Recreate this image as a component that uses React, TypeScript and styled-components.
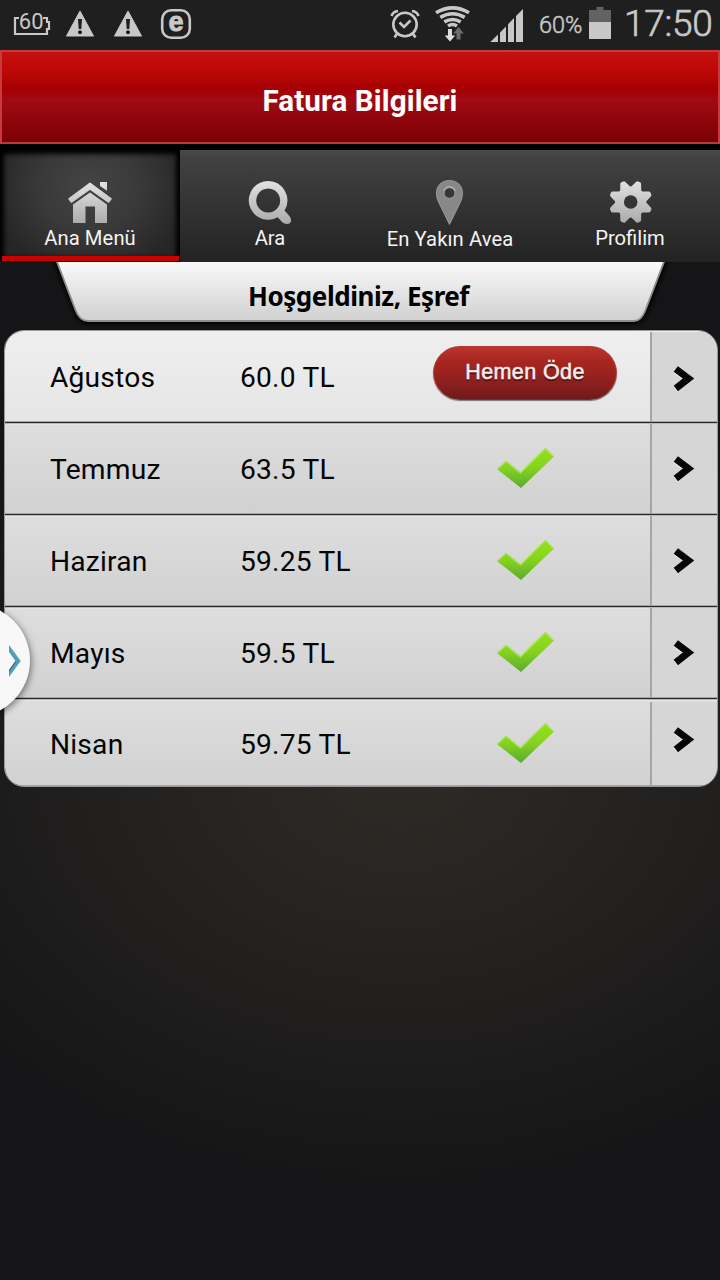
import React from "react";
import styled, { createGlobalStyle, css } from "styled-components";

const GlobalStyle = createGlobalStyle`
  * { box-sizing: border-box; }
  html, body { margin: 0; padding: 0; background: #141416; }
  body { font-family: Roboto, "Liberation Sans", sans-serif; }
`;

const Screen = styled.div`
  width: 720px;
  height: 1280px;
  position: relative;
  overflow: hidden;
  display: flex;
  flex-direction: column;
  background:
    radial-gradient(ellipse 560px 420px at 400px 770px, #2e2a26 0%, #242220 45%, rgba(21, 21, 23, 0) 100%),
    #151517;
`;

const StatusBar = styled.div`
  height: 50px;
  flex: none;
  display: flex;
  background: #1f1f1f;
  color: #c8c8c8;
  svg { display: block; flex: none; }
`;

const StatusSpacer = styled.div`
  flex: 1;
`;

const Percent = styled.span`
  width: 49px;
  padding-left: 8px;
  line-height: 50px;
  font-size: 23.5px;
  white-space: nowrap;
  font-weight: 300;
  -webkit-text-stroke: 0.5px #c8c8c8;
`;

const Clock = styled.span`
  width: 103px;
  padding-left: 7px;
  line-height: 48px;
  font-size: 37px;
  font-weight: 300;
  letter-spacing: -0.3px;
  white-space: nowrap;
  -webkit-text-stroke: 0.7px #c8c8c8;
`;

const TitleBar = styled.header`
  height: 94px;
  flex: none;
  display: flex;
  align-items: center;
  justify-content: center;
  padding-top: 8px;
  border: 2px solid #c93a3c;
  border-bottom-color: #b23b3d;
  background: linear-gradient(#c60f0f 0%, #bd0808 22%, #a40003 42%, #9f0c13 54%, #8b040a 80%, #7c0003 100%);
`;

const Title = styled.h1`
  margin: 0;
  font-size: 29.6px;
  line-height: 34px;
  font-weight: 700;
  letter-spacing: 0.1px;
  color: #fff;
  white-space: nowrap;
`;

const TabBar = styled.nav`
  height: 118px;
  flex: none;
  display: flex;
  padding-top: 6px;
  background: #000;
`;

const Tab = styled.div<{ $active?: boolean }>`
  width: 180px;
  height: 112px;
  padding-top: 26px;
  display: flex;
  flex-direction: column;
  align-items: center;
  background: linear-gradient(#494949 0, #414141 8%, #232323 100%);
  svg { display: block; }
  ${(p) =>
    p.$active &&
    css`
      background: radial-gradient(ellipse 100px 90px at 50% 32%, #444 0%, #393939 50%, #262626 100%);
      box-shadow: inset 0 0 5px 4px #000;
      padding-bottom: 1px;
    `}
`;

const TabLabel = styled.span<{ $spacing?: number; $drop?: number }>`
  font-size: 20.2px;
  line-height: 24px;
  margin-top: ${(p) => p.$drop ?? 0}px;
  letter-spacing: ${(p) => p.$spacing ?? 0}px;
  color: #f4f4f4;
  white-space: nowrap;
`;

const ActiveLine = styled.div`
  width: 177px;
  height: 5px;
  margin-top: auto;
  margin-left: 1px;
  background: #cb0000;
`;

const Ribbon = styled.div`
  height: 68px;
  flex: none;
  display: grid;
  justify-items: center;
  > * { grid-area: 1 / 1; }
  svg { display: block; }
`;

const Greeting = styled.h2`
  margin: 17px 0 0;
  padding-right: 3px;
  z-index: 1;
  height: 34px;
  font: 700 26px/34px "Noto Sans", sans-serif;
  letter-spacing: -0.45px;
  color: #000;
  white-space: nowrap;
`;

const BillList = styled.main`
  height: 457px;
  flex: none;
  margin: 0 2px 0 4px;
  display: flex;
  flex-direction: column;
  overflow: hidden;
  border: 1px solid #999;
  border-radius: 20px;
`;

const Row = styled.div<{ $current?: boolean }>`
  flex: 1 0 0;
  display: flex;
  background: ${(p) => (p.$current ? "linear-gradient(#efefef, #e5e5e5)" : "linear-gradient(#dedede, #d1d1d1)")};
  &:not(:last-child) {
    flex: 0 0 92px;
    border-bottom: 1px solid #262626;
    box-shadow: inset 0 -1px #a6a6a6;
  }
  & + & {
    box-shadow: inset 0 1px #b8b8b8, inset 0 2px #e4e4e4, inset 0 -1px #a6a6a6;
  }
  &:last-child {
    padding-top: 2px;
  }
`;

const Cell = styled.div<{ $width: number }>`
  width: ${(p) => p.$width}px;
  flex: none;
  padding-top: 2px;
  display: flex;
  align-items: center;
  font-size: 28.2px;
  letter-spacing: 0.2px;
  color: #050505;
  white-space: nowrap;
`;

const StatusCell = styled.div`
  flex: 1;
  display: flex;
  align-items: center;
`;

const PayButton = styled.button`
  width: 184px;
  height: 54px;
  margin: 0 0 8px 28px;
  padding: 0 0 2px;
  border: 1px solid #b13a36;
  border-bottom-color: #6d302e;
  border-radius: 27px;
  background: linear-gradient(#bb332c 0%, #a6251f 30%, #96221f 55%, #831e1e 80%, #6e1919 100%);
  box-shadow: 0 1px 1px #777;
  font: 400 21.5px/26px "Liberation Sans", sans-serif;
  letter-spacing: 0.4px;
  color: #f6eeee;
  -webkit-text-stroke: 0.5px #f6eeee;
  text-shadow: 0 2px 1px #4c1010;
`;

const CheckSlot = styled.div`
  padding: 0 0 1px 91px;
  svg { display: block; }
`;

const Arrow = styled.div<{ $shift: number }>`
  width: 67px;
  flex: none;
  display: flex;
  align-items: center;
  justify-content: center;
  background: #d6d6d6;
  border-left: 2px solid #a5a5a5;
  margin: 1px 0;
  padding-right: 1px;
  padding-bottom: ${(p) => (p.$shift < 0 ? -2 * p.$shift : 0)}px;
  padding-top: ${(p) => (p.$shift > 0 ? 2 * p.$shift : 0)}px;
  svg { display: block; }
`;

const EdgeHandle = styled.div`
  position: absolute;
  left: -83px;
  top: 604px;
  width: 113px;
  height: 113px;
  border-radius: 50%;
  display: flex;
  align-items: center;
  justify-content: flex-end;
  padding-right: 8px;
  background: #f8f8f8;
  box-shadow: 1px 2px 7px rgba(0, 0, 0, 0.5);
`;

const WarningIcon = ({ x }: { x: number }) => (
  <g transform={`translate(${x} 0)`}>
    <path d="M14 11 L27.5 36 H0.5 Z" fill="#c8c8c8" stroke="#c8c8c8" strokeWidth="1" strokeLinejoin="round" />
    <path d="M12 19 H16 L15.3 29 H12.7 Z" fill="#1f1f1f" />
    <circle cx="14" cy="32.3" r="2" fill="#1f1f1f" />
  </g>
);

const NotificationIcons = () => (
  <svg width="200" height="50" viewBox="0 0 200 50">
    <path d="M19 18 H15 V34 H47 V29 H49 V22 H47 V18 H43" fill="none" stroke="#c8c8c8" strokeWidth="2.2" />
    <text x="31.2" y="28.5" textAnchor="middle" fontFamily="Roboto" fontSize="22" fill="#c8c8c8">60</text>
    <WarningIcon x={66} />
    <WarningIcon x={114} />
    <rect x="162.2" y="10.2" width="27.6" height="27.6" rx="9" fill="none" stroke="#c8c8c8" strokeWidth="2.6" />
    <text x="176" y="31.2" textAnchor="middle" fontFamily="Liberation Sans" fontWeight="700" fontSize="27" fill="#c8c8c8" stroke="#c8c8c8" strokeWidth="0.9">e</text>
  </svg>
);

const SystemIcons = () => (
  <svg width="146" height="50" viewBox="385 0 146 50">
    <g fill="none" stroke="#c8c8c8" strokeWidth="2.6">
      <circle cx="405" cy="24.5" r="11.7" />
      <path d="M399.5 22.5 L404 27 L410.5 20.5" />
      <path d="M391.5 16 Q393 11.5 398 11 M418.5 16 Q417 11.5 412 11" />
      <path d="M397.5 33 L394.5 37.5 M412.5 33 L415.5 37.5" />
    </g>
    <g fill="none" stroke="#c8c8c8" strokeWidth="3.6">
      <path d="M436 12.7 Q452.5 3 469 12.7" />
      <path d="M440.3 17.4 Q452.5 10 464.7 17.4" />
      <path d="M444.3 21.9 Q452.5 17 460.7 21.9" />
      <path d="M448 26 Q452.5 23 457 26" />
    </g>
    <path d="M448 29 H452 V35.5 H455.3 L450 41.5 L444.7 35.5 H448 Z" fill="#dedede" />
    <path d="M456.5 39.5 H460.5 V33.5 H463.8 L458.5 27 L453.2 33.5 H456.5 Z" fill="#6c6c6c" />
    <g fill="#c8c8c8">
      <path d="M490.3 42 L498 34.5 V42 Z" />
      <path d="M500 42 V32.5 L506 26.6 V42 Z" />
      <path d="M508 42 V24.2 L514 18 V42 Z" />
      <path d="M516 42 V16 L523 9 V42 Z" />
    </g>
  </svg>
);

const BatteryIcon = () => (
  <svg width="37" height="50" viewBox="580 0 37 50">
    <path d="M589 10 H596.5 V7 H603.5 V10 H611 V22 H589 Z" fill="#626262" />
    <rect x="589" y="22" width="22" height="17" fill="#c8c8c8" />
  </svg>
);

const HomeIcon = () => (
  <svg width="48" height="50" viewBox="66 176 48 50">
    <defs>
      <linearGradient id="home" gradientUnits="userSpaceOnUse" x1="0" y1="181" x2="0" y2="223">
        <stop offset="0" stopColor="#e4e4e4" />
        <stop offset="1" stopColor="#adadad" />
      </linearGradient>
    </defs>
    <g fill="url(#home)">
      <path
        d="M90 183.3 L111 198.8 L108.6 202 L90 188.8 L71.4 202 L69 198.8 Z"
        stroke="url(#home)"
        strokeWidth="1.6"
        strokeLinejoin="round"
      />
      <path d="M100 182 H107 V190.8 L100 186 Z" />
      <path d="M90 192.5 L107 204.5 V223 H95 V206.5 H85.5 V223 H73 V204.5 Z" />
    </g>
  </svg>
);

const SearchIcon = () => (
  <svg width="48" height="50" viewBox="246 176 48 50">
    <defs>
      <linearGradient id="search" x1="0" y1="0" x2="0" y2="1">
        <stop offset="0" stopColor="#e2e2e2" />
        <stop offset="1" stopColor="#ababab" />
      </linearGradient>
    </defs>
    <path
      d="M268.2 181 A19.4 19.4 0 1 0 277.7 217.3 L282 222 Q284 224 287 224 Q291 223.7 291 220.5 Q291 217.5 289 215.5 L284.5 210.5 A19.4 19.4 0 0 0 268.2 181 Z M268.2 188.5 A12 12 0 1 1 268.19 188.5 Z"
      fill="url(#search)"
      fillRule="evenodd"
    />
  </svg>
);

const PinIcon = () => (
  <svg width="48" height="50" viewBox="426 176 48 50">
    <path
      d="M449.5 224.5 L438.5 202 C433 190 439 180.5 449.5 180.5 C460 180.5 466 190 460.5 202 Z M449.5 187.7 A5.3 5.3 0 1 0 449.51 187.7 Z"
      fill="#888"
      stroke="#a3a3a3"
      strokeWidth="0.8"
      fillRule="evenodd"
    />
    <path d="M443.8 191 A6 6 0 0 1 455.2 191" fill="none" stroke="#c9c9c9" strokeWidth="1" />
  </svg>
);

const teeth = [22.5, 67.5, 112.5, 157.5, 202.5, 247.5, 292.5, 337.5];

const GearIcon = () => (
  <svg width="48" height="50" viewBox="606 176 48 50">
    <defs>
      <linearGradient id="gear" gradientUnits="userSpaceOnUse" x1="0" y1="-20" x2="0" y2="20">
        <stop offset="0" stopColor="#e0e0e0" />
        <stop offset="1" stopColor="#acacac" />
      </linearGradient>
      <mask id="gearMask">
        <g fill="#fff">
          <circle r="15.6" />
          {teeth.map((a) => (
            <path
              key={a}
              d="M-6.5 -12 L-3.2 -19.5 Q-2.7 -21.9 -1 -21.9 H1 Q2.7 -21.9 3.2 -19.5 L6.5 -12 Z"
              transform={`rotate(${a})`}
            />
          ))}
        </g>
        <circle r="6.8" fill="#000" />
      </mask>
    </defs>
    <g transform="translate(630.7 202)">
      <rect x="-23" y="-23" width="46" height="46" fill="url(#gear)" mask="url(#gearMask)" />
    </g>
  </svg>
);

const RibbonShape = () => (
  <svg width="720" height="68" viewBox="0 262 720 68">
    <defs>
      <linearGradient id="ribbon" x1="0" y1="0" x2="0" y2="1">
        <stop offset="0" stopColor="#fcfcfc" />
        <stop offset="1" stopColor="#d0d0d0" />
      </linearGradient>
      <filter id="ribbonShadow" x="-5%" y="-20%" width="110%" height="150%">
        <feGaussianBlur stdDeviation="2.5" />
      </filter>
    </defs>
    <path d="M52 258 L74 312 Q77 324 90 324 H632 Q643 324 648 312 L669 258 Z" fill="#000" filter="url(#ribbonShadow)" />
    <path
      d="M55.5 258 L75.5 310 Q79.5 321 88 321 H634 Q641.5 321 645.5 310 L665.5 258 Z"
      fill="url(#ribbon)"
      stroke="#8e8e8e"
      strokeWidth="1.8"
    />
  </svg>
);

const CheckIcon = () => (
  <svg width="60" height="42" viewBox="0 0 60 42">
    <defs>
      <linearGradient id="check" x1="0" y1="0" x2="0" y2="1">
        <stop offset="0" stopColor="#96e01b" />
        <stop offset="0.5" stopColor="#85d31e" />
        <stop offset="1" stopColor="#5bab32" />
      </linearGradient>
    </defs>
    <path
      d="M1.5 22 L10 14.5 L24.5 26 L49.5 1.5 L57.5 9.5 L25 40.5 Z"
      fill="url(#check)"
      stroke="url(#check)"
      strokeWidth="1"
      strokeLinejoin="round"
    />
    <path d="M2 21.5 L10 14.3 L24.5 25.8 L49.5 1.5 L57 9" fill="none" stroke="#a9e55a" strokeWidth="1.3" />
  </svg>
);

const ChevronIcon = () => (
  <svg width="26" height="30" viewBox="0 0 26 30">
    <path d="M4.5 6.5 L17 15.7 L4.5 25.5" fill="none" stroke="#efefef" strokeWidth="6" />
    <path d="M4.8 5 L17.5 14.5 L4.8 24.5" fill="none" stroke="#050505" strokeWidth="7" />
  </svg>
);

const HandleArrow = () => (
  <svg width="14" height="34" viewBox="0 0 14 34">
    <path d="M1 1 L12.7 17 L1 33 V26 L7.5 17 L1 8 Z" fill="#519fbb" />
    <path d="M1 26 L7.5 17 L8.3 18 L1 28 Z" fill="#387087" />
  </svg>
);

const bills = [
  { month: "Ağustos", amount: "60.0 TL", due: true, arrowShift: 2 },
  { month: "Temmuz", amount: "63.5 TL", arrowShift: 0 },
  { month: "Haziran", amount: "59.25 TL", arrowShift: 0 },
  { month: "Mayıs", amount: "59.5 TL", arrowShift: 0 },
  { month: "Nisan", amount: "59.75 TL", arrowShift: -4 },
];

export default function App() {
  return (
    <>
      <GlobalStyle />
      <Screen>
        <StatusBar>
          <NotificationIcons />
          <StatusSpacer />
          <SystemIcons />
          <Percent>60%</Percent>
          <BatteryIcon />
          <Clock>17:50</Clock>
        </StatusBar>
        <TitleBar>
          <Title>Fatura Bilgileri</Title>
        </TitleBar>
        <TabBar>
          <Tab $active>
            <HomeIcon />
            <TabLabel $spacing={0.1}>Ana Menü</TabLabel>
            <ActiveLine />
          </Tab>
          <Tab>
            <SearchIcon />
            <TabLabel>Ara</TabLabel>
          </Tab>
          <Tab>
            <PinIcon />
            <TabLabel $spacing={0.1} $drop={1}>En Yakın Avea</TabLabel>
          </Tab>
          <Tab>
            <GearIcon />
            <TabLabel>Profilim</TabLabel>
          </Tab>
        </TabBar>
        <Ribbon>
          <RibbonShape />
          <Greeting>Hoşgeldiniz, Eşref</Greeting>
        </Ribbon>
        <BillList>
          {bills.map((b) => (
            <Row key={b.month} $current={b.due}>
              <Cell $width={45} />
              <Cell $width={190}>{b.month}</Cell>
              <Cell $width={165}>{b.amount}</Cell>
              <StatusCell>
                {b.due ? (
                  <PayButton>Hemen Öde</PayButton>
                ) : (
                  <CheckSlot>
                    <CheckIcon />
                  </CheckSlot>
                )}
              </StatusCell>
              <Arrow $shift={b.arrowShift}>
                <ChevronIcon />
              </Arrow>
            </Row>
          ))}
        </BillList>
        <EdgeHandle>
          <HandleArrow />
        </EdgeHandle>
      </Screen>
    </>
  );
}
